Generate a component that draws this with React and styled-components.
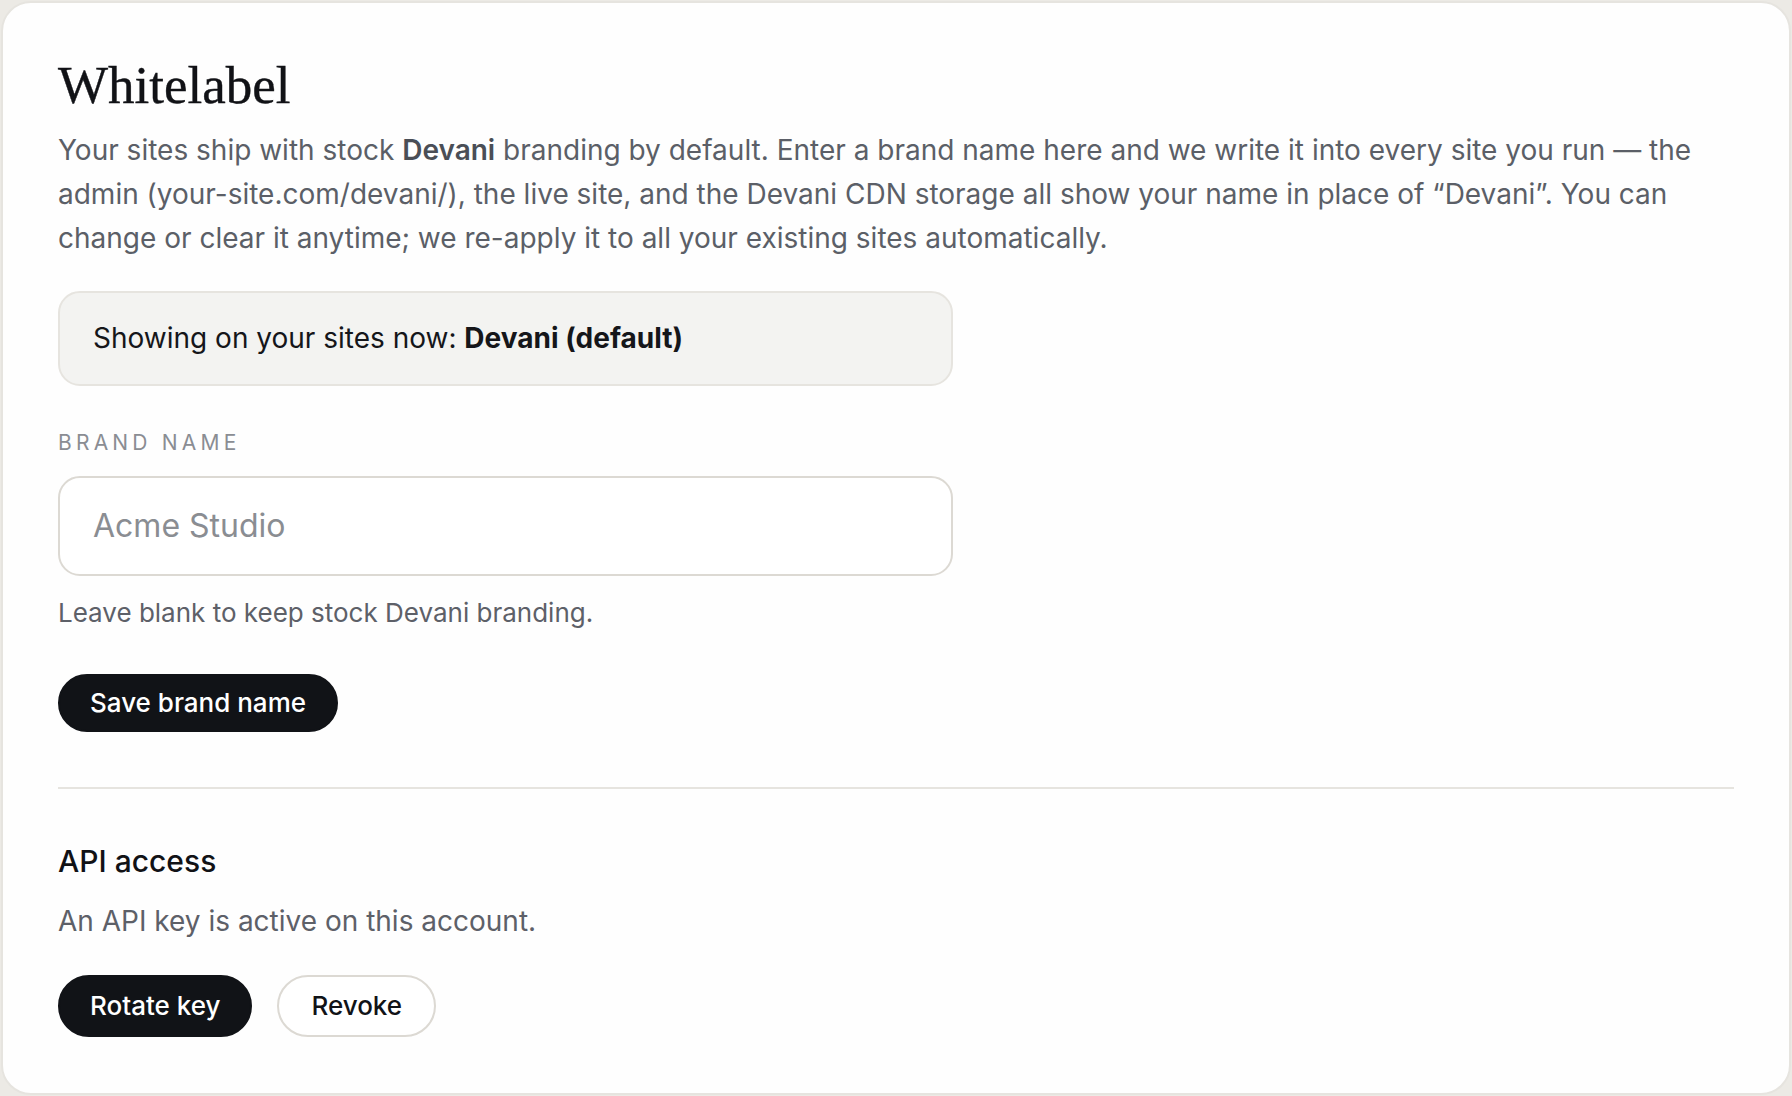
import React, { useState } from "react";
import styled, { createGlobalStyle } from "styled-components";

const GlobalStyle = createGlobalStyle`
  html, body {
    margin: 0;
    padding: 0;
    background: #eceae5;
  }
  #root {
    padding: 1px;
  }
  * {
    box-sizing: border-box;
  }
`;

const Card = styled.section`
  min-height: calc(100vh - 2px);
  padding: 51px 55px 0 55px;
  background: #fefefe;
  border: 2px solid #e6e4df;
  border-radius: 30px;
  font-family: Inter, "Noto Sans", sans-serif;
`;

const Title = styled.h1`
  margin: 0;
  font-family: "Liberation Serif", "Times New Roman", serif;
  font-size: 53px;
  font-weight: 400;
  line-height: 1.2;
  color: #111216;
  -webkit-text-stroke: 0.4px #111216;
`;

const Lead = styled.p`
  margin: 10px 0 0;
  font-size: 28px;
  line-height: 44px;
  color: #5b5f67;

  strong {
    font-weight: 600;
    color: #4a4e56;
  }
`;

const Current = styled.div`
  display: flex;
  align-items: center;
  max-width: 895px;
  height: 95px;
  margin-top: 31px;
  padding: 0 33px;
  background: #f3f3f1;
  border: 2px solid #e6e4df;
  border-radius: 22px;
  font-size: 28px;
  color: #15161a;

  strong {
    font-weight: 700;
  }
`;

const Label = styled.label`
  display: block;
  margin-top: 44px;
  font-size: 21px;
  line-height: 1.2;
  letter-spacing: 0.2em;
  text-transform: uppercase;
  color: #8a8d93;
`;

const Input = styled.input`
  display: block;
  width: 100%;
  max-width: 895px;
  height: 100px;
  margin-top: 21px;
  padding: 0 33px;
  border: 2px solid #dcd9d3;
  border-radius: 22px;
  background: #fff;
  font-family: inherit;
  font-size: 32px;
  color: #15161a;
  outline: none;

  &::placeholder {
    color: #8a8d92;
  }
`;

const Hint = styled.p`
  margin: 17px 0 0;
  font-size: 26px;
  line-height: 39px;
  color: #5d6068;
`;

const Button = styled.button`
  height: ${(p) => (p.$tall ? "62px" : "58px")};
  padding: 0 ${(p) => (p.$ghost ? "32px" : "30px")};
  border-radius: 999px;
  border: 2px solid ${(p) => (p.$ghost ? "#dcd9d3" : "#111317")};
  background: ${(p) => (p.$ghost ? "#fff" : "#111317")};
  color: ${(p) => (p.$ghost ? "#111317" : "#fff")};
  font-family: inherit;
  font-size: 26px;
  font-weight: 500;
  cursor: pointer;
`;

const SaveRow = styled.div`
  margin-top: 42px;
`;

const Divider = styled.hr`
  margin: 55px 0 0;
  border: 0;
  border-top: 2px solid #e6e4df;
`;

const SectionTitle = styled.h2`
  margin: 54px 0 0;
  font-size: 30px;
  font-weight: 500;
  line-height: 1.2;
  color: #111216;
`;

const Note = styled.p`
  margin: 22px 0 0;
  font-size: 28px;
  line-height: 40px;
  color: #5d6068;
`;

const Actions = styled.div`
  display: flex;
  gap: 25px;
  margin-top: 34px;
`;

export default function App() {
  const [brand, setBrand] = useState("");

  return (
    <>
      <GlobalStyle />
      <Card>
        <Title>Whitelabel</Title>
        <Lead>
          Your sites ship with stock <strong>Devani</strong> branding by
          default. Enter a brand name here and we write it into every site you
          run — the admin (your-site.com/devani/), the live site, and the
          Devani CDN storage all show your name in place of “Devani”. You can
          change or clear it anytime; we re-apply it to all your existing sites
          automatically.
        </Lead>

        <Current>
          <span>
            Showing on your sites now: <strong>Devani (default)</strong>
          </span>
        </Current>

        <Label htmlFor="brand">Brand name</Label>
        <Input
          id="brand"
          type="text"
          placeholder="Acme Studio"
          value={brand}
          onChange={(e) => setBrand(e.target.value)}
        />
        <Hint>Leave blank to keep stock Devani branding.</Hint>

        <SaveRow>
          <Button>Save brand name</Button>
        </SaveRow>

        <Divider />

        <SectionTitle>API access</SectionTitle>
        <Note>An API key is active on this account.</Note>
        <Actions>
          <Button $tall>Rotate key</Button>
          <Button $tall $ghost>
            Revoke
          </Button>
        </Actions>
      </Card>
    </>
  );
}
